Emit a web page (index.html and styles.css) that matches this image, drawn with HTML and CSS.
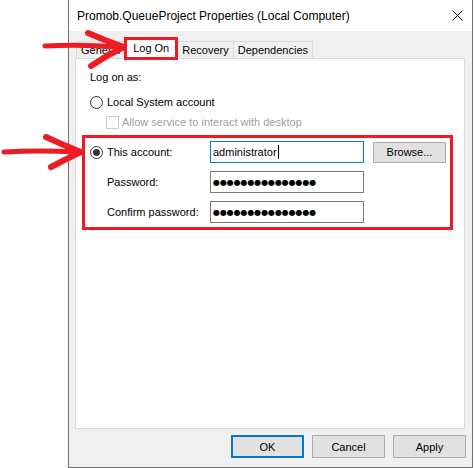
FILE: index.html
```html
<!DOCTYPE html>
<html lang="en">
<head>
  <meta charset="UTF-8">
  <title>Promob.QueueProject Properties</title>
  <link rel="stylesheet" href="styles.css">
</head>
<body>
  <div class="window">
    <div class="titlebar">
      <span class="title">Promob.QueueProject Properties (Local Computer)</span>
      <svg class="close" width="11" height="11" viewBox="0 0 11 11">
        <path d="M0.5 0.5L10.5 10.5M10.5 0.5L0.5 10.5" stroke="#000" stroke-width="1"/>
      </svg>
    </div>

    <div class="tabs">
      <div class="tab">General</div>
      <div class="tab active">Log On</div>
      <div class="tab">Recovery</div>
      <div class="tab">Dependencies</div>
    </div>

    <div class="panel">
      <div class="caption">Log on as:</div>
      <div class="option"><span class="radio"></span>Local System account</div>
      <div class="option sub"><span class="check"></span>Allow service to interact with desktop</div>

      <div class="account">
        <div class="option"><span class="radio on"></span>This account:</div>
        <div class="field focus">administrator<span class="caret"></span></div>
        <button class="btn browse">Browse...</button>

        <div class="row-label">Password:</div>
        <div class="field dots">●●●●●●●●●●●●●●●</div>

        <div class="row-label">Confirm password:</div>
        <div class="field dots">●●●●●●●●●●●●●●●</div>
      </div>
    </div>

    <div class="actions">
      <button class="btn default">OK</button>
      <button class="btn">Cancel</button>
      <button class="btn">Apply</button>
    </div>
  </div>

  <!-- red annotation arrows drawn over the dialog -->
  <svg class="marks" width="474" height="468" viewBox="0 0 474 468">
    <g fill="none" stroke="#ed1c24" stroke-linecap="round" stroke-linejoin="round">
      <path d="M45 46 Q80 44 119 47" stroke-width="5"/>
      <path d="M88 33 Q106 41 124 47 Q107 55 91 66" stroke-width="6"/>
      <path d="M4 152 Q40 150 77 152" stroke-width="5"/>
      <path d="M46 137 Q63 145 81 152 Q66 159 51 167" stroke-width="6"/>
    </g>
  </svg>
</body>
</html>
```

FILE: styles.css
```css
body {
  margin: 0;
  height: 468px;
  overflow: hidden;
  position: relative;
  background: #fff;
  font-family: "Liberation Sans", Arial, sans-serif;
  font-size: 11px;
  color: #000;
}

.window {
  margin-left: 68px;
  width: 405px;
  height: 468px;
  box-sizing: border-box;
  border: 1px solid #707070;
  border-top: none;
  background: #f0f0f0;
  display: flex;
  flex-direction: column;
}

.titlebar {
  height: 31px;
  flex-shrink: 0;
  background: #fff;
  display: flex;
  align-items: center;
  justify-content: space-between;
  padding: 0 9px 0 8px;
  font-size: 12px;
}

.tabs {
  display: flex;
  align-items: flex-end;
  height: 21px;
  margin-top: 6px;
  padding-left: 7px;
  flex-shrink: 0;
}

.tab {
  height: 17px;
  box-sizing: border-box;
  border: 1px solid #d9d9d9;
  border-bottom: none;
  padding: 0 4px;
  line-height: 16px;
  background: #f0f0f0;
}

.tab + .tab {
  margin-left: -1px;
}

.tab.active {
  height: 23px;
  margin-bottom: -2px;
  border: 3px solid #ed1c24;
  padding: 0 6px;
  line-height: 17px;
  background: #fff;
  position: relative;
  z-index: 1;
}

.panel {
  flex: 1;
  margin: 0 7px 0 6px;
  border: 1px solid #d9d9d9;
  background: #fff;
  padding: 12px 11px 0 6px;
}

.caption {
  padding-left: 8px;
  line-height: 13px;
}

.option {
  display: flex;
  align-items: center;
  gap: 4px;
  line-height: 13px;
}

.panel > .option {
  padding-left: 8px;
  margin-top: 12px;
}

.panel > .option.sub {
  padding-left: 24px;
  margin-top: 7px;
  gap: 3px;
  color: #a0a0a0;
}

.radio {
  width: 13px;
  height: 13px;
  box-sizing: border-box;
  border: 1px solid #333;
  border-radius: 50%;
  background: #fff;
  display: flex;
  align-items: center;
  justify-content: center;
}

.radio.on::after {
  content: "";
  width: 7px;
  height: 7px;
  border-radius: 50%;
  background: #333;
}

.check {
  width: 13px;
  height: 13px;
  box-sizing: border-box;
  border: 1px solid #ccc;
  background: #fff;
}

.account {
  margin-top: 6px;
  border: 3px solid #ed1c24;
  display: grid;
  grid-template-columns: 111px 154px 73px;
  column-gap: 9px;
  row-gap: 8px;
  align-items: center;
  padding: 3px 0 4px 5px;
}

.row-label {
  grid-column: 1;
  padding-left: 17px;
}

.field {
  height: 22px;
  box-sizing: border-box;
  border: 1px solid #7a7a7a;
  padding: 0 2px;
  display: flex;
  align-items: center;
}

.field.focus {
  border-color: #0078d7;
}

.caret {
  width: 1px;
  height: 14px;
  margin-left: 1px;
  background: #000;
}

.dots {
  font-family: "DejaVu Sans", sans-serif;
  font-size: 8px;
  letter-spacing: -0.1px;
}

.btn {
  font: inherit;
  color: #000;
  width: 73px;
  height: 23px;
  padding: 0;
  background: #e1e1e1;
  border: 1px solid #adadad;
}

.btn.browse {
  height: 21px;
}

.btn.default {
  border: 2px solid #0078d7;
}

.actions {
  display: flex;
  justify-content: flex-end;
  gap: 8px;
  padding: 6px 6px 9px;
  flex-shrink: 0;
}

.marks {
  position: absolute;
  left: 0;
  top: 0;
  pointer-events: none;
}
```
